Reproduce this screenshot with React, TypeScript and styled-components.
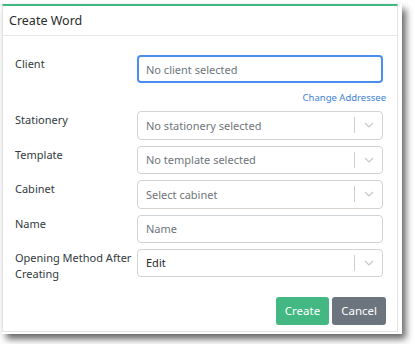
import React from "react";
import styled, { createGlobalStyle } from "styled-components";

const Global = createGlobalStyle`
  html, body { margin: 0; padding: 0; background: #ffffff; }
  body { font-family: "Noto Sans", "Open Sans", Arial, sans-serif; }
  * { box-sizing: border-box; }
`;

const Page = styled.div`
  width: 415px;
  height: 344px;
  padding: 4px 0 0 2px;
  overflow: hidden;
`;

const Frame = styled.div`
  width: 400px;
  height: 330px;
  background: #ffffff;
  padding: 0 4px 2px 0;
  box-shadow: 4px 5px 7px rgba(0, 0, 0, 0.6);
`;

const Dialog = styled.div`
  height: 100%;
  border: 1px solid #e3e3e3;
  border-top: 2px solid #41b883;
  display: flex;
  flex-direction: column;
`;

const Header = styled.div`
  height: 30px;
  border-bottom: 1px solid #e6e6e6;
  padding: 0 0 0 6px;
  display: flex;
  align-items: center;
  font-size: 12.5px;
  color: #2b2b2b;
`;

const Body = styled.div`
  padding: 19px 14px 0 12px;
  display: flex;
  flex-direction: column;
`;

const Row = styled.div<{ $mb?: number }>`
  display: grid;
  grid-template-columns: 122px 1fr;
  margin-bottom: ${(p) => p.$mb ?? 6}px;
`;

const Label = styled.div`
  font-size: 11px;
  line-height: 16px;
  color: #333a40;
  padding-top: 1px;
  padding-right: 4px;
`;

const Field = styled.div`
  display: flex;
  flex-direction: column;
`;

const Input = styled.div<{ $focus?: boolean }>`
  height: 28px;
  border: ${(p) => (p.$focus ? "2px solid #4a8ff0" : "1px solid #cfd4d9")};
  border-radius: 4px;
  display: flex;
  align-items: center;
  padding-left: ${(p) => (p.$focus ? 7 : 8)}px;
  font-size: 11px;
  color: #6c757d;
`;

const Select = styled.div`
  height: 28.5px;
  border: 1px solid #d3d3d3;
  border-radius: 4px;
  display: flex;
  align-items: center;
  font-size: 11px;
`;

const Value = styled.span<{ $placeholder?: boolean }>`
  flex: 1;
  padding-left: 8px;
  color: ${(p) => (p.$placeholder ? "#6f757b" : "#2a2a2a")};
`;

const Sep = styled.span`
  width: 1px;
  height: 16px;
  background: #cccccc;
`;

const Arrow = styled.span`
  width: 27px;
  display: flex;
  align-items: center;
  justify-content: center;
`;

const LinkRow = styled.div`
  display: flex;
  justify-content: flex-end;
  margin: 8px -3px 0 0;
  height: 20px;
`;

const Link = styled.a`
  font-size: 9.5px;
  color: #3d7fd9;
  text-decoration: none;
`;

const Footer = styled.div`
  display: flex;
  justify-content: flex-end;
  gap: 3px;
  padding: 9px 11px 0 0;
`;

const Button = styled.button<{ $variant: "primary" | "secondary" }>`
  height: 28px;
  border: none;
  border-radius: 3px;
  padding: 0 9px;
  font-family: inherit;
  font-size: 11.5px;
  color: #ffffff;
  background: ${(p) => (p.$variant === "primary" ? "#43b883" : "#6c757d")};
`;

const Chevron = () => (
  <svg width="10" height="6" viewBox="0 0 10 6">
    <path d="M1 1 L5 5 L9 1" fill="none" stroke="#c8c8c8" strokeWidth="1.2" />
  </svg>
);

const SelectBox = ({ value, placeholder }: { value: string; placeholder?: boolean }) => (
  <Select>
    <Value $placeholder={placeholder}>{value}</Value>
    <Sep />
    <Arrow>
      <Chevron />
    </Arrow>
  </Select>
);

export default function App() {
  return (
    <>
      <Global />
      <Page>
        <Frame>
          <Dialog>
            <Header>Create Word</Header>
            <Body>
              <Row $mb={0}>
                <Label>Client</Label>
                <Field>
                  <Input $focus>No client selected</Input>
                  <LinkRow>
                    <Link href="#">Change Addressee</Link>
                  </LinkRow>
                </Field>
              </Row>
              <Row>
                <Label>Stationery</Label>
                <SelectBox value="No stationery selected" placeholder />
              </Row>
              <Row>
                <Label>Template</Label>
                <SelectBox value="No template selected" placeholder />
              </Row>
              <Row>
                <Label>Cabinet</Label>
                <SelectBox value="Select cabinet" placeholder />
              </Row>
              <Row>
                <Label>Name</Label>
                <Input>Name</Input>
              </Row>
              <Row>
                <Label>Opening Method After Creating</Label>
                <SelectBox value="Edit" />
              </Row>
            </Body>
            <Footer>
              <Button $variant="primary">Create</Button>
              <Button $variant="secondary">Cancel</Button>
            </Footer>
          </Dialog>
        </Frame>
      </Page>
    </>
  );
}
